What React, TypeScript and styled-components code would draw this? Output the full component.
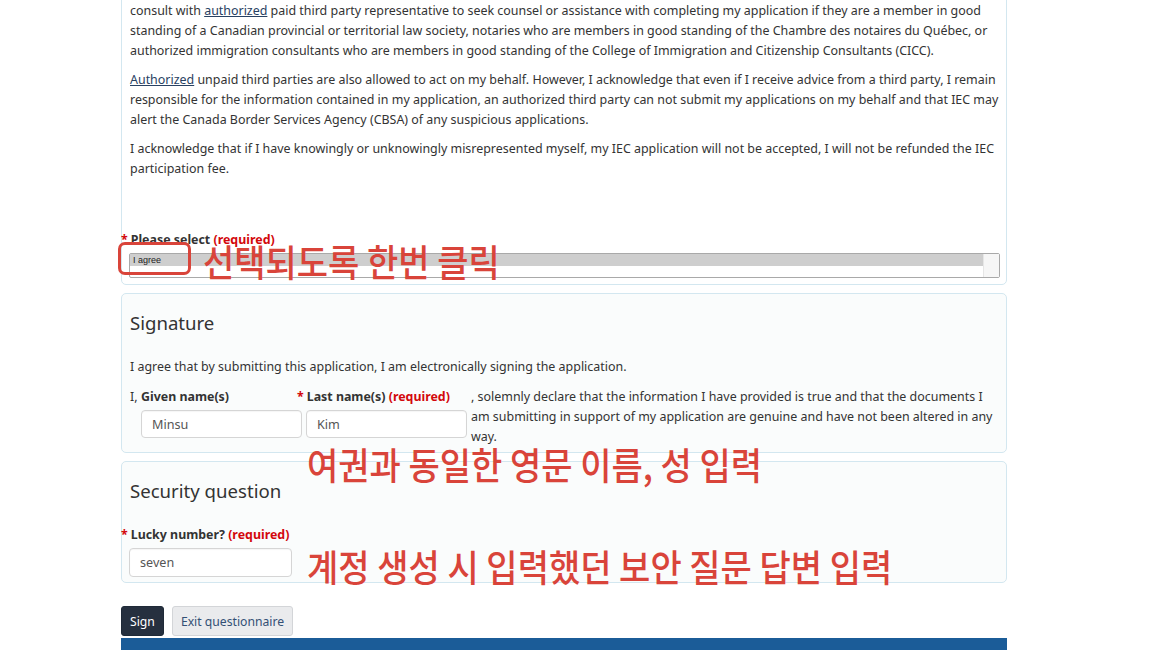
import React from "react";
import styled, { createGlobalStyle } from "styled-components";

const GlobalStyle = createGlobalStyle`
  html, body {
    margin: 0;
    padding: 0;
    background: #ffffff;
    overflow: hidden;
  }
  body {
    font-family: "Noto Sans", "Open Sans", sans-serif;
    color: #333333;
  }
`;

const Page = styled.div`
  position: relative;
  width: 886px;
  margin-top: -20px;
  padding-left: 121px;
  height: 670px;
`;

const Panel = styled.section<{ $first?: boolean; $tint?: boolean }>`
  box-sizing: border-box;
  border: 1px solid #d3e7f0;
  border-radius: 5px;
  background: ${(p) => (p.$tint ? "#fafcfc" : "#ffffff")};
  padding: ${(p) => (p.$first ? "20px 7px 6px 8px" : "8px 7px 5px 8px")};
  & + & {
    margin-top: 8px;
  }
`;

const Para = styled.p`
  margin: 0 0 9px;
  font-size: 12.45px;
  line-height: 20px;
  color: #333333;
`;

const Link = styled.a`
  color: #284162;
  text-decoration: underline;
`;

const Heading = styled.h2`
  margin: 7px 0 20px;
  font-size: 18.6px;
  line-height: 28px;
  font-weight: 400;
  color: #333333;
`;

const Label = styled.label<{ $gap?: number }>`
  display: block;
  font-size: 12.4px;
  line-height: 20px;
  font-weight: 700;
  color: #333333;
  margin-bottom: ${(p) => p.$gap ?? 3}px;
`;

const Star = styled.span`
  color: #d3080c;
  margin-left: -9px;
  margin-right: 3px;
`;

const Required = styled.strong`
  color: #d3080c;
  font-weight: 700;
`;

const ListBox = styled.div`
  box-sizing: border-box;
  width: 871px;
  height: 25px;
  margin-left: -1px;
  border: 1px solid #a9a9a9;
  border-radius: 2px;
  display: flex;
  background: #ffffff;
`;

const Options = styled.div`
  flex: 1;
`;

const Option = styled.div<{ $selected?: boolean }>`
  height: 12px;
  background: ${(p) => (p.$selected ? "#cecece" : "transparent")};
  font-family: "Liberation Sans", Arial, sans-serif;
  font-size: 9px;
  line-height: 12px;
  color: #222222;
  padding-left: 3px;
`;

const ScrollTrack = styled.div`
  width: 15px;
  background: #f6f6f6;
  border-left: 1px solid #e6e6e6;
`;

const SignRow = styled.div`
  display: flex;
  align-items: flex-start;
  gap: 4px;
  font-size: 12.45px;
  line-height: 20px;
`;

const Lead = styled.span`
  width: 7px;
`;

const Field = styled.div`
  width: 161px;
  flex: none;
`;

const Input = styled.input<{ $width?: number }>`
  box-sizing: border-box;
  display: block;
  width: ${(p) => p.$width ?? 161}px;
  height: 28px;
  border: 1px solid #d5d5d5;
  border-radius: 4px;
  padding: 0 10px;
  font-family: "Noto Sans", sans-serif;
  font-size: 12.6px;
  color: #555555;
  background: #ffffff;
  box-shadow: inset 0 1px 1px rgba(0, 0, 0, 0.04);
  outline: none;
`;

const Declare = styled.div`
  flex: 1;
  color: #333333;
  padding-right: 6px;
`;

const Actions = styled.div`
  display: flex;
  gap: 8px;
  margin-top: 23px;
`;

const Button = styled.button<{ $primary?: boolean }>`
  height: 30px;
  padding: 0 8px;
  border-radius: 3px;
  font-family: "Noto Sans", sans-serif;
  font-size: 12.2px;
  border: 1px solid ${(p) => (p.$primary ? "#1f2a38" : "#d3d5d8")};
  background: ${(p) => (p.$primary ? "#26303f" : "#eaebed")};
  color: ${(p) => (p.$primary ? "#ffffff" : "#335075")};
`;

const FooterBar = styled.div`
  height: 30px;
  margin-top: 2px;
  background: #1b5c98;
`;

const Note = styled.div<{ $x: number; $y: number }>`
  position: absolute;
  left: ${(p) => p.$x}px;
  top: ${(p) => p.$y}px;
  font-family: "Noto Sans CJK KR", "Noto Sans", sans-serif;
  font-weight: 500;
  font-size: 34px;
  line-height: 40px;
  color: #d9443a;
  white-space: nowrap;
  transform: scaleY(1.1);
  transform-origin: left center;
`;

const Marker = styled.div`
  position: absolute;
  left: 118px;
  top: 262px;
  width: 67px;
  height: 27px;
  border: 3px solid #d9443a;
  border-radius: 7px;
`;

export default function App() {
  return (
    <>
      <GlobalStyle />
      <Page>
        <Panel $first>
          <Para>
            consult with <Link>authorized</Link> paid third party representative to seek counsel or
            assistance with completing my application if they are a member in good standing of a
            Canadian provincial or territorial law society, notaries who are members in good
            standing of the Chambre des notaires du Québec, or authorized immigration consultants
            who are members in good standing of the College of Immigration and Citizenship
            Consultants (CICC).
          </Para>
          <Para>
            <Link>Authorized</Link> unpaid third parties are also allowed to act on my behalf.
            However, I acknowledge that even if I receive advice from a third party, I remain
            responsible for the information contained in my application, an authorized third party
            can not submit my applications on my behalf and that IEC may alert the Canada Border
            Services Agency (CBSA) of any suspicious applications.
          </Para>
          <Para style={{ marginBottom: 51 }}>
            I acknowledge that if I have knowingly or unknowingly misrepresented myself, my IEC
            application will not be accepted, I will not be refunded the IEC participation fee.
          </Para>
          <Label>
            <Star>*</Star>Please select <Required>(required)</Required>
          </Label>
          <ListBox>
            <Options>
              <Option $selected>I agree</Option>
            </Options>
            <ScrollTrack />
          </ListBox>
        </Panel>

        <Panel $tint>
          <Heading>Signature</Heading>
          <Para style={{ marginBottom: 10 }}>
            I agree that by submitting this application, I am electronically signing the
            application.
          </Para>
          <SignRow>
            <Lead>I,</Lead>
            <Field>
              <Label $gap={3}>Given name(s)</Label>
              <Input defaultValue="Minsu" />
            </Field>
            <Field>
              <Label $gap={3}>
                <Star>*</Star>Last name(s) <Required>(required)</Required>
              </Label>
              <Input defaultValue="Kim" />
            </Field>
            <Declare>
              , solemnly declare that the information I have provided is true and that the
              documents I am submitting in support of my application are genuine and have not been
              altered in any way.
            </Declare>
          </SignRow>
        </Panel>

        <Panel $tint>
          <Heading>Security question</Heading>
          <Label>
            <Star>*</Star>Lucky number? <Required>(required)</Required>
          </Label>
          <Input $width={163} style={{ height: 29, marginLeft: -1 }} defaultValue="seven" />
        </Panel>

        <Actions>
          <Button $primary>Sign</Button>
          <Button>Exit questionnaire</Button>
        </Actions>
        <FooterBar />

        <Marker />
        <Note $x={203} $y={262}>선택되도록 한번 클릭</Note>
        <Note $x={307} $y={465}>여권과 동일한 영문 이름, 성 입력</Note>
        <Note $x={307} $y={567}>계정 생성 시 입력했던 보안 질문 답변 입력</Note>
      </Page>
    </>
  );
}
